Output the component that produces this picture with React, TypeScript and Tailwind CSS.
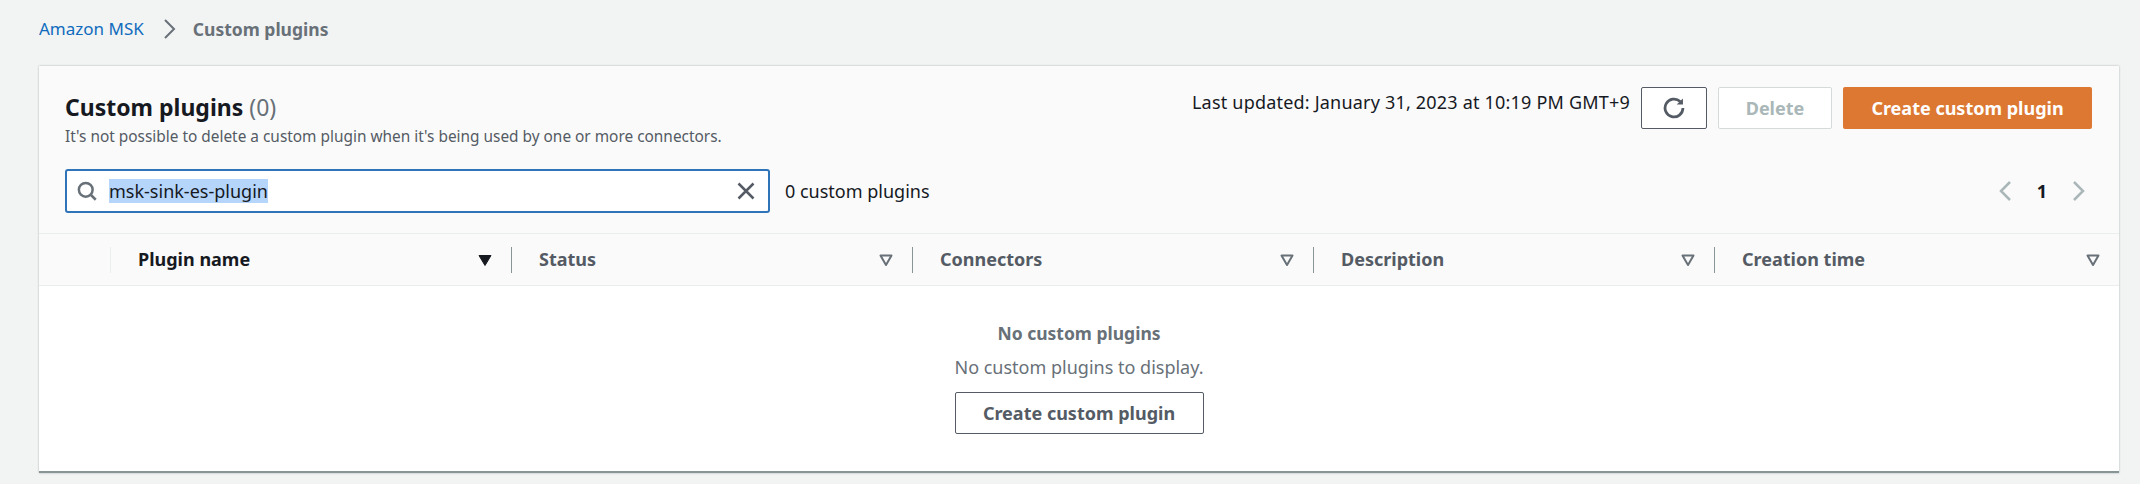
const font = "font-['Noto_Sans',sans-serif]";

function CaretIcon({ filled }: { filled?: boolean }) {
  return (
    <svg width="16" height="14" viewBox="0 0 16 14" className="shrink-0">
      {filled ? (
        <path d="M2 2.5h12L8 12.5z" fill="#16191f" stroke="#16191f" strokeLinejoin="round" />
      ) : (
        <path d="M2.5 2.5h11L8 12z" fill="none" stroke="#687078" strokeWidth="2" strokeLinejoin="round" />
      )}
    </svg>
  );
}

function RefreshIcon() {
  return (
    <svg width="22" height="22" viewBox="0 0 16 16" fill="none" stroke="#545b64" strokeWidth="2">
      <path d="M14.5 8a6.5 6.5 0 1 1-2-4.7" />
      <path d="M14.5 1v4.5H10z" fill="#545b64" stroke="none" />
    </svg>
  );
}

const columns = [
  { name: 'Plugin name', width: 'w-[401px]', sorted: true },
  { name: 'Status', width: 'w-[401px]' },
  { name: 'Connectors', width: 'w-[401px]' },
  { name: 'Description', width: 'w-[401px]' },
  { name: 'Creation time', width: 'flex-1' },
];

export default function App() {
  return (
    <div className={`${font} h-[484px] w-[2140px] overflow-hidden bg-[#f2f3f3] pl-[39px] pr-[21px] text-[#16191f]`}>
      {/* Breadcrumb */}
      <div className="flex h-[66px] items-start pt-[17px] text-[17px] leading-[24px]">
        <span className="text-[#0f6cbd]">Amazon MSK</span>
        <svg width="14" height="24" viewBox="0 0 14 24" fill="none" stroke="#687078" strokeWidth="2" className="ml-[19px] mr-[16px]">
          <path d="M2 3l9 9-9 9" />
        </svg>
        <span className="text-[17.5px] font-bold text-[#687078]">Custom plugins</span>
      </div>

      {/* Card */}
      <div className="h-[407px] border-b-2 border-b-[#879596] bg-white shadow-[0_0_2px_rgba(0,28,36,0.3)]">
        <div className="h-[168px] border-b border-[#eaeded] bg-[#fafafa] pl-[26px] pr-[27px]">
          <div className="flex h-[103px] justify-between pt-[21px]">
            <div className="pt-[5px]">
              <h1 className="text-[23px] font-bold leading-[30px]">
                Custom plugins <span className="font-normal text-[#687078]">(0)</span>
              </h1>
              <p className="mt-[3px] text-[15.4px] leading-[24px] text-[#545b64]">
                It's not possible to delete a custom plugin when it's being used by one or more connectors.
              </p>
            </div>
            <div className="flex items-start">
              <span className="mr-[11px] text-[18px] leading-[30px] tracking-[0.2px]">Last updated: January 31, 2023 at 10:19 PM GMT+9</span>
              <button className="mr-[11px] flex h-[42px] w-[66px] items-center justify-center rounded-[2px] border border-[#545b64] bg-white">
                <RefreshIcon />
              </button>
              <button className="mr-[11px] h-[42px] w-[114px] rounded-[2px] border border-[#d5dbdb] bg-white text-[18px] font-bold text-[#aab7b8]">
                Delete
              </button>
              <button className="h-[42px] w-[249px] rounded-[2px] bg-[#dd7832] text-[18px] font-bold text-white">
                Create custom plugin
              </button>
            </div>
          </div>

          <div className="flex items-center">
            <div className="flex h-[44px] w-[705px] items-center rounded-[3px] border-2 border-[#2f73b8] bg-white pl-[10px] pr-[12px]">
              <svg width="20" height="20" viewBox="0 0 16 16" fill="none" stroke="#687078" strokeWidth="2" className="shrink-0">
                <circle cx="7" cy="7" r="5.5" />
                <path d="M11 11l4 4" />
              </svg>
              <span className="ml-[12px] bg-[#b5d5fb] text-[18px] leading-[24px]">msk-sink-es-plugin</span>
              <svg width="20" height="20" viewBox="0 0 16 16" fill="none" stroke="#545b64" strokeWidth="2" className="ml-auto shrink-0">
                <path d="M2 2l12 12M14 2L2 14" />
              </svg>
            </div>
            <span className="ml-[15px] text-[18px]">0 custom plugins</span>
            <div className="ml-auto flex items-center pr-[5px]">
              <svg width="16" height="24" viewBox="0 0 16 24" fill="none" stroke="#aab7b8" strokeWidth="2.5">
                <path d="M13 3l-9 9 9 9" />
              </svg>
              <span className="mx-[24px] text-[18px] font-bold">1</span>
              <svg width="16" height="24" viewBox="0 0 16 24" fill="none" stroke="#aab7b8" strokeWidth="2.5">
                <path d="M3 3l9 9-9 9" />
              </svg>
            </div>
          </div>
        </div>

        {/* Table header */}
        <div className="flex h-[52px] items-center border-b border-[#eaeded] bg-[#fafafa] pl-[71px]">
          {columns.map((c, i) => (
            <div
              key={c.name}
              className={`${c.width} flex h-[26px] items-center justify-between border-l pl-[27px] pr-[18px] ${i === 0 ? 'border-[#eaeded]' : 'border-[#879596]'}`}
            >
              <span className={`text-[18px] font-bold ${c.sorted ? 'text-[#16191f]' : 'text-[#545b64]'}`}>{c.name}</span>
              <CaretIcon filled={c.sorted} />
            </div>
          ))}
        </div>

        {/* Empty state */}
        <div className="flex flex-col items-center pt-[35px]">
          <p className="text-[17.5px] font-bold leading-[24px] text-[#687078]">No custom plugins</p>
          <p className="mt-[10px] text-[18px] leading-[24px] text-[#687078]">No custom plugins to display.</p>
          <button className="mt-[13px] h-[42px] w-[249px] rounded-[2px] border border-[#545b64] bg-white text-[18px] font-bold text-[#545b64]">
            Create custom plugin
          </button>
        </div>
      </div>
    </div>
  );
}
